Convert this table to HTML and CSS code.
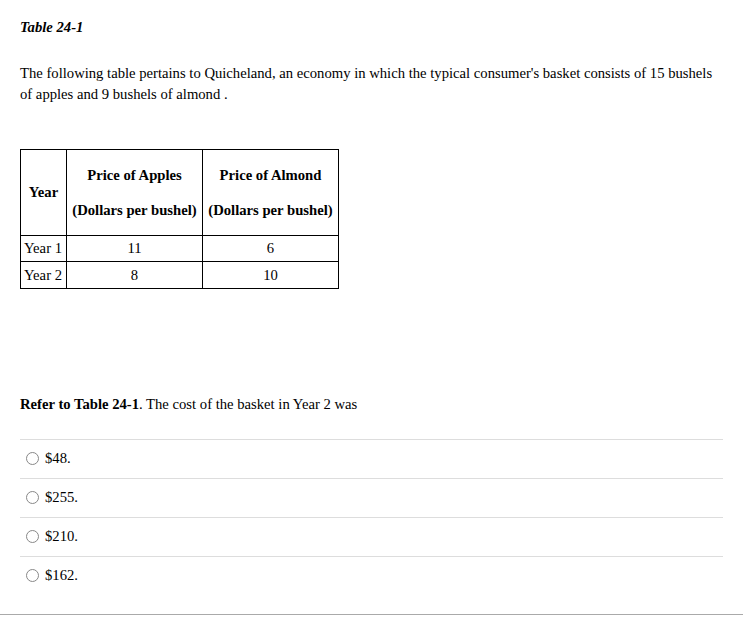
FILE: index.html
```html
<!DOCTYPE html>
<html>
<head>
<meta charset="utf-8">
<link rel="stylesheet" href="styles.css">
</head>
<body>
<div class="question">
  <div class="stem">
    <p class="title"><b><i>Table 24-1</i></b></p>
    <p class="intro">The following table pertains to Quicheland, an economy in which the typical consumer's basket consists of 15 bushels of apples and 9 bushels of almond .</p>
    <table class="data">
      <tr class="head">
        <th class="c-year">Year</th>
        <th class="c-price"><p>Price of Apples</p><p>(Dollars per bushel)</p></th>
        <th class="c-price"><p>Price of Almond</p><p>(Dollars per bushel)</p></th>
      </tr>
      <tr><td class="c-year">Year 1</td><td>11</td><td>6</td></tr>
      <tr><td class="c-year">Year 2</td><td>8</td><td>10</td></tr>
    </table>
    <p class="prompt"><b>Refer to Table 24-1</b>. The cost of the basket in Year 2 was</p>
  </div>
  <ul class="choices">
    <li><span class="radio"></span><span>$48.</span></li>
    <li><span class="radio"></span><span>$255.</span></li>
    <li><span class="radio"></span><span>$210.</span></li>
    <li><span class="radio"></span><span>$162.</span></li>
  </ul>
</div>
</body>
</html>
```

FILE: styles.css
```css
html, body {
  margin: 0;
  padding: 0;
  background: #fff;
}
body {
  font-family: "Liberation Serif", "Times New Roman", serif;
  font-size: 14.667px;
  color: #000;
}
.question {
  border-bottom: 1px solid #aaa;
  padding-bottom: 19px;
}
.stem {
  padding: 0 20px;
}
.title {
  margin: 0;
  padding-top: 17px;
  line-height: 20px;
}
.intro {
  margin: 26px 0 0;
  line-height: 21px;
}
.data {
  border-collapse: collapse;
  margin-top: 44px;
}
.data th, .data td {
  border: 1px solid #000;
  padding: 0 4px;
  text-align: center;
}
.data th {
  font-weight: bold;
  height: 85px;
}
.data th p {
  margin: 0;
  line-height: 35px;
}
.data td {
  height: 25px;
  line-height: 25px;
}
.data tr:last-child td {
  height: 26px;
}
.data .c-year {
  width: 39px;
  padding: 0 3px;
}
.data td.c-year {
  text-align: left;
}
.data th.c-price {
  width: 127px;
}
.prompt {
  margin: 105px 0 0;
  line-height: 20px;
}
.choices {
  list-style: none;
  margin: 25px 20px 0;
  padding: 0;
}
.choices li {
  border-top: 1px solid #ddd;
  height: 38px;
  box-sizing: content-box;
  display: flex;
  align-items: center;
  gap: 6px;
  padding: 0 0 0 6px;
}
.choices li span:last-child {
  margin-bottom: 2px;
}
.radio {
  width: 11px;
  height: 11px;
  border: 1px solid #888;
  border-radius: 50%;
  box-sizing: content-box;
  margin-bottom: 2px;
}
```
